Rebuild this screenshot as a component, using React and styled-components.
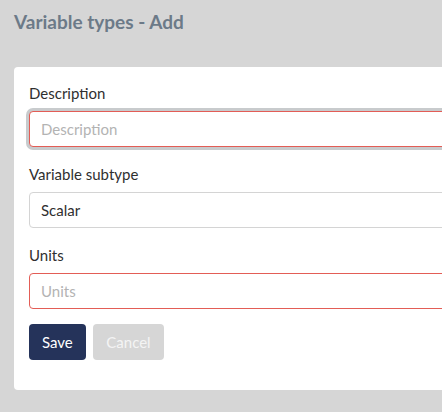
import styled, { createGlobalStyle } from 'styled-components'

const GlobalStyle = createGlobalStyle`
  html, body {
    margin: 0;
    padding: 0;
    background: #d6d6d6;
    overflow: hidden;
  }
  body {
    font-family: Lato, "Open Sans", sans-serif;
  }
`

const Page = styled.div`
  width: 442px;
  height: 412px;
  overflow: hidden;
  padding: 10px 0 0 14px;
  box-sizing: border-box;
`

const Title = styled.h1`
  margin: 0;
  font-size: 19px;
  font-weight: 700;
  color: #6c7a88;
  line-height: 24px;
`

const Card = styled.div`
  margin-top: 33px;
  width: 470px;
  height: 323px;
  background: #fff;
  border-radius: 4px;
  padding: 16px 15px;
  box-sizing: border-box;
`

const Field = styled.div`
  display: flex;
  flex-direction: column;
  margin-bottom: 17px;
`

const Label = styled.label`
  font-size: 15px;
  color: #2f2f2f;
  line-height: 20px;
  margin-bottom: 8px;
`

const Input = styled.input`
  height: 36px;
  box-sizing: border-box;
  border: 1px solid ${(p) => (p.$invalid ? '#e35d56' : '#d4d4d4')};
  border-radius: 4px;
  padding: 0 11px;
  font-family: inherit;
  font-size: 15px;
  color: #333;
  outline: none;
  box-shadow: ${(p) => (p.$focused ? '0 0 0 3px #c8cbcd' : 'none')};
  &::placeholder {
    color: #b3b3b3;
  }
`

const Select = styled.div`
  height: 36px;
  box-sizing: border-box;
  border: 1px solid #d4d4d4;
  border-radius: 4px;
  padding: 0 11px;
  display: flex;
  align-items: center;
  font-size: 15px;
  color: #2f2f2f;
`

const Actions = styled.div`
  display: flex;
  gap: 7px;
  margin-top: -2px;
`

const Button = styled.button`
  height: 36px;
  border: none;
  border-radius: 4px;
  padding: 0 ${(p) => (p.$primary ? '13px' : '13.5px')};
  font-family: inherit;
  font-size: 15px;
  background: ${(p) => (p.$primary ? '#25335a' : '#d6d6d6')};
  color: ${(p) => (p.$primary ? '#fff' : '#f4f4f4')};
  cursor: pointer;
`

const App = () => {
  return (
    <Page>
      <GlobalStyle />
      <Title>Variable types - Add</Title>
      <Card>
        <Field>
          <Label>Description</Label>
          <Input placeholder='Description' $invalid $focused />
        </Field>
        <Field>
          <Label>Variable subtype</Label>
          <Select>Scalar</Select>
        </Field>
        <Field>
          <Label>Units</Label>
          <Input placeholder='Units' $invalid />
        </Field>
        <Actions>
          <Button $primary>Save</Button>
          <Button>Cancel</Button>
        </Actions>
      </Card>
    </Page>
  )
}

export default App
